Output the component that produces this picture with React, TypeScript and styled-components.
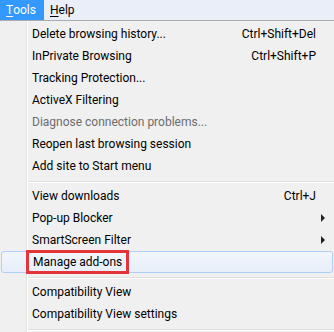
import { createGlobalStyle, styled } from 'styled-components';

type Entry =
  | { kind: 'item'; label: string; shortcut?: string; submenu?: boolean; disabled?: boolean; hot?: boolean }
  | { kind: 'sep' };

const entries: Entry[] = [
  { kind: 'item', label: 'Delete browsing history...', shortcut: 'Ctrl+Shift+Del' },
  { kind: 'item', label: 'InPrivate Browsing', shortcut: 'Ctrl+Shift+P' },
  { kind: 'item', label: 'Tracking Protection...' },
  { kind: 'item', label: 'ActiveX Filtering' },
  { kind: 'item', label: 'Diagnose connection problems...', disabled: true },
  { kind: 'item', label: 'Reopen last browsing session' },
  { kind: 'item', label: 'Add site to Start menu' },
  { kind: 'sep' },
  { kind: 'item', label: 'View downloads', shortcut: 'Ctrl+J' },
  { kind: 'item', label: 'Pop-up Blocker', submenu: true },
  { kind: 'item', label: 'SmartScreen Filter', submenu: true },
  { kind: 'item', label: 'Manage add-ons', hot: true },
  { kind: 'sep' },
  { kind: 'item', label: 'Compatibility View' },
  { kind: 'item', label: 'Compatibility View settings' },
  { kind: 'sep' }
];

const App = () => {
  return (
    <>
      <GlobalStyle />
      <Page>
        <MenuBar>
          <MenuTitle $active>
            <u>T</u>ools
          </MenuTitle>
          <MenuTitle>
            <u>H</u>elp
          </MenuTitle>
        </MenuBar>
        <Menu>
          {entries.map((entry, index) => {
            if (entry.kind === 'sep') {
              return <Separator key={index} />;
            }
            return (
              <Item key={index} $hot={entry.hot} $disabled={entry.disabled}>
                <Label>{entry.hot ? <Marked>{entry.label}</Marked> : entry.label}</Label>
                <Shortcut>{entry.shortcut}</Shortcut>
                <ArrowCell>{entry.submenu && <Arrow />}</ArrowCell>
              </Item>
            );
          })}
        </Menu>
      </Page>
    </>
  );
};

export default App;

const GlobalStyle = createGlobalStyle`
  body {
    margin: 0;
    background: #f0f0f0;
    font-family: Roboto, "Noto Sans", sans-serif;
    font-size: 12px;
  }
`;

const Page = styled.div`
  width: 334px;
  height: 332px;
  overflow: hidden;
`;

const MenuBar = styled.div`
  display: flex;
  height: 20px;
  background: #e9eef8;
  border-bottom: 1px solid #a9acb1;
`;

const MenuTitle = styled.div<{ $active?: boolean }>`
  display: flex;
  align-items: center;
  padding: 0 8px 0 6px;
  color: ${(props) => (props.$active ? '#ffffff' : '#000000')};
  background: ${(props) => (props.$active ? '#3399ff' : 'transparent')};
  u {
    text-decoration-thickness: 1px;
    text-underline-offset: 2px;
  }
`;

const Menu = styled.div`
  padding-top: 2px;
  background: linear-gradient(
    to right,
    #f0f0f0 0,
    #f0f0f0 26px,
    #e2e3e3 26px,
    #e2e3e3 27px,
    #ffffff 27px,
    #ffffff 28px,
    #f0f0f0 28px
  );
`;

const Item = styled.div<{ $hot?: boolean; $disabled?: boolean }>`
  display: flex;
  align-items: center;
  box-sizing: border-box;
  height: 22px;
  padding: 0 8px 0 32px;
  color: ${(props) => (props.$disabled ? '#6d6d6d' : '#000000')};
  ${(props) =>
    props.$hot &&
    `
    margin: 0 1px;
    padding: 0 7px 0 31px;
    border: 1px solid #aecff7;
    border-radius: 3px;
    background: linear-gradient(to bottom, #f2f6fc, #e6eef9);
  `}
`;

const Label = styled.span`
  flex: 1;
  white-space: nowrap;
`;

const Marked = styled.span`
  display: inline-block;
  margin: -2px 0 -2px -7px;
  padding: 0 4px;
  line-height: 18px;
  border: 3px solid #e5343a;
`;

const Shortcut = styled.span`
  white-space: nowrap;
`;

const ArrowCell = styled.span`
  display: flex;
  justify-content: flex-end;
  width: 10px;
`;

const Arrow = styled.span`
  width: 0;
  height: 0;
  margin-right: 1px;
  border-top: 4px solid transparent;
  border-bottom: 4px solid transparent;
  border-left: 4px solid #222222;
`;

const Separator = styled.div`
  height: 8px;
  margin-left: 28px;
  background: linear-gradient(
    to bottom,
    transparent 0,
    transparent 4px,
    #e0e0e0 4px,
    #e0e0e0 5px,
    #ffffff 5px,
    #ffffff 6px,
    transparent 6px
  );
`;
